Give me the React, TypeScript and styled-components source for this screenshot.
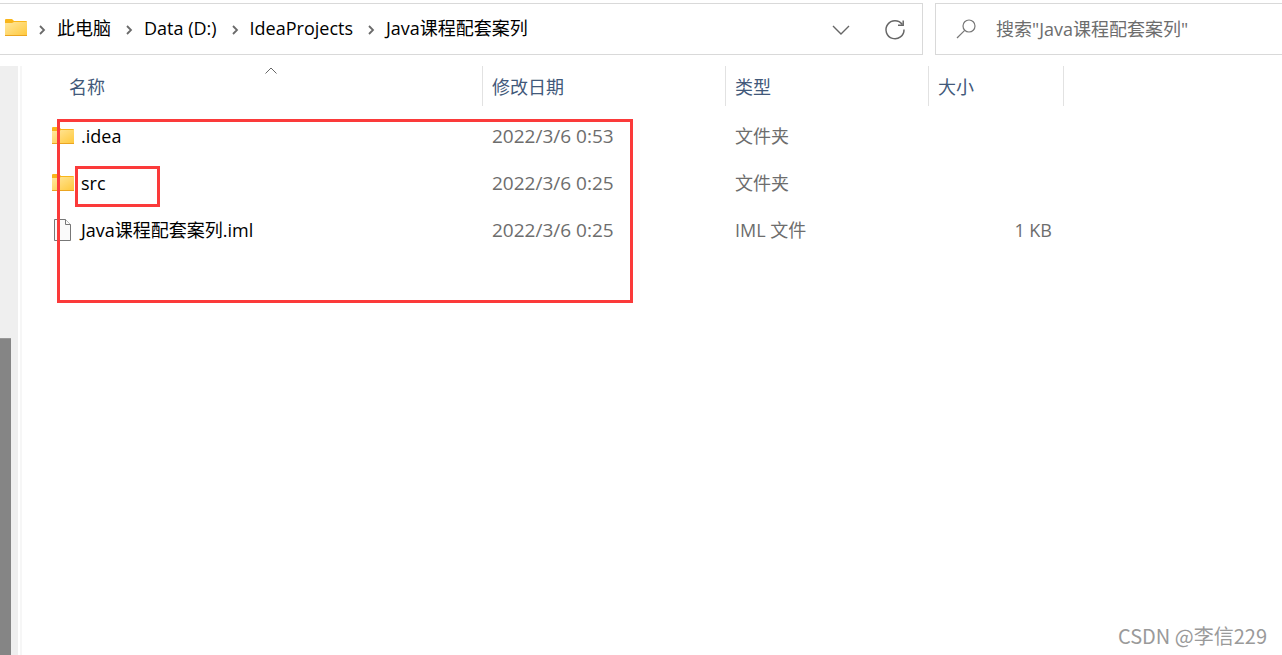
import React from 'react';
import styled, { createGlobalStyle } from 'styled-components';

const uiFont = '"Open Sans", "Noto Sans CJK SC", sans-serif';

const GlobalStyle = createGlobalStyle`
  *, *::before, *::after { box-sizing: border-box; }
  body { margin: 0; background: #fff; font-family: ${uiFont}; font-size: 18px; line-height: 24px; color: #000; }
  button, input { font: inherit; color: inherit; }
`;

const Window = styled.div`
  position: relative;
  display: flex;
  flex-direction: column;
  min-height: 100vh;
  padding-top: 3px;
  overflow: hidden;
`;

const Toolbar = styled.header`
  display: flex;
  gap: 12px;
  height: 52px;
`;

const AddressBar = styled.div`
  flex: 1;
  min-width: 0;
  display: flex;
  align-items: center;
  padding: 0 15px 2px 5px;
  border: 1px solid #d9d9d9;
  border-left: 0;
`;

const Crumbs = styled.nav`
  flex: 1;
  display: flex;
  align-items: center;
  gap: 3px;
`;

const Crumb = styled.a`
  display: flex;
  align-items: center;
  color: #000;
  text-decoration: none;
  white-space: nowrap;
`;

const CrumbArrow = styled.svg`
  display: block;
  margin: 4px 11px 0;
`;

const IconButton = styled.button`
  display: flex;
  align-items: center;
  justify-content: center;
  width: 24px;
  height: 24px;
  padding: 0;
  border: 0;
  background: none;
`;

const AddressActions = styled.div`
  display: flex;
  gap: 30px;
  padding-top: 3px;
`;

const SearchBox = styled.label`
  display: flex;
  align-items: center;
  gap: 18px;
  width: 347px;
  padding-left: 20px;
  border: 1px solid #d9d9d9;
  border-right: 0;
`;

const SearchInput = styled.input`
  flex: 1;
  min-width: 0;
  padding: 0;
  border: 0;
  outline: 0;
  background: none;
  &::placeholder { color: #6d6d6d; opacity: 1; }
`;

const Body = styled.main`
  flex: 1;
  display: flex;
  margin-top: 11px;
`;

const ScrollTrack = styled.div`
  display: flex;
  width: 18px;
  padding: 272px 7px 0 0;
  background: #efefef;
`;

const ScrollThumb = styled.div`
  flex: 1;
  border-top: 1px solid #999;
  background: #858585;
`;

const Splitter = styled.div`
  width: 4px;
  border-right: 2px solid #f6f6f6;
`;

const Listing = styled.section`
  position: relative;
  flex: 1;
  padding-left: 30px;
`;

const FileTable = styled.table`
  table-layout: fixed;
  width: 1012px;
  border-collapse: collapse;
`;

const HeaderCell = styled.th<{ $width: number; $first?: boolean }>`
  width: ${p => p.$width}px;
  padding: 0 0 6px ${p => (p.$first ? 8 : 0)}px;
  font-weight: 400;
`;

const SortButton = styled.button`
  position: relative;
  display: flex;
  align-items: center;
  width: 100%;
  height: 40px;
  padding: 2px 9px 0;
  border: 0;
  border-right: 1px solid #e2e2e2;
  background: none;
  color: #42597a;
`;

const SortCaret = styled.svg`
  position: absolute;
  top: 1px;
  left: 50%;
  margin-left: -6px;
`;

const Row = styled.tr`
  height: 47px;
`;

const Cell = styled.td<{ $right?: boolean }>`
  padding: 0 12px 0 9px;
  color: #6d6d6d;
  white-space: nowrap;
  text-align: ${p => (p.$right ? 'right' : 'left')};
`;

const DateCell = styled(Cell)`
  font-size: 19px;
`;

const NameCell = styled(Cell)`
  padding: 0;
`;

const FileLink = styled.a`
  display: flex;
  align-items: center;
  gap: 7px;
  color: #000;
  text-decoration: none;
`;

const Highlight = styled.div<{ $x: number; $y: number; $w: number; $h: number }>`
  position: absolute;
  left: ${p => p.$x}px;
  top: ${p => p.$y}px;
  width: ${p => p.$w}px;
  height: ${p => p.$h}px;
  border: 3px solid #fb3a3a;
  pointer-events: none;
`;

const Watermark = styled.div`
  position: absolute;
  right: 15px;
  bottom: 7px;
  color: #9a9a9a;
  font-family: "Noto Sans CJK SC", sans-serif;
  font-size: 20px;
`;

function FolderIcon({ id }: { id: string }) {
  return (
    <svg width="22" height="18" viewBox="0 0 22 18" aria-hidden="true">
      <defs>
        <linearGradient id={id} x1="0" y1="0" x2="1" y2="1">
          <stop offset="0" stopColor="#ffe8a0" />
          <stop offset="1" stopColor="#ffc83a" />
        </linearGradient>
      </defs>
      <path d="M0 1Q0 0 1 0H7L9 2H21Q22 2 22 3V6H0Z" fill="#f9b61b" />
      <path d="M0 4H7L9 3H22V17H0Z" fill={`url(#${id})`} />
      <path d="M0 16H22V17H0Z" fill="#eba521" />
    </svg>
  );
}

function FileIcon() {
  return (
    <svg width="22" height="22" viewBox="0 0 22 22" fill="#fafafa" stroke="#777" aria-hidden="true">
      <path d="M2.500 .5H13.500L18.500 5.500V21.500H2.500Z" />
      <path d="M13.500 .5V5.500H18.500" />
    </svg>
  );
}

const crumbs = ['此电脑', 'Data (D:)', 'IdeaProjects', 'Java课程配套案列'];

const columns = [
  { label: '名称', width: 431 },
  { label: '修改日期', width: 243 },
  { label: '类型', width: 203 },
  { label: '大小', width: 135 },
];

const files = [
  { name: '.idea', date: '2022/3/6 0:53', type: '文件夹', size: '', folder: true },
  { name: 'src', date: '2022/3/6 0:25', type: '文件夹', size: '', folder: true },
  { name: 'Java课程配套案列.iml', date: '2022/3/6 0:25', type: 'IML 文件', size: '1 KB', folder: false },
];

export default function App() {
  return (
    <Window>
      <GlobalStyle />
      <Toolbar>
        <AddressBar>
          <FolderIcon id="folder-address" />
          <Crumbs aria-label="地址">
            {crumbs.map(label => (
              <Crumb key={label} href="#">
                <CrumbArrow width="8" height="10" viewBox="0 0 8 10" fill="none" stroke="#6a6a6a" strokeWidth="1.800" aria-hidden="true">
                  <path d="M2 1L6 5L2 9" />
                </CrumbArrow>
                {label}
              </Crumb>
            ))}
          </Crumbs>
          <AddressActions>
            <IconButton aria-label="历史记录">
              <svg width="18" height="10" viewBox="0 0 18 10" fill="none" stroke="#666" strokeWidth="1.400">
                <path d="M1 1L9 9L17 1" />
              </svg>
            </IconButton>
            <IconButton aria-label="刷新">
              <svg width="22" height="22" viewBox="0 0 22 22" fill="none" stroke="#666" strokeWidth="1.500">
                <path d="M18.300 5.500A9 9 0 1 0 20 10.500" />
                <path d="M19.200 1.500V6.200H14" />
              </svg>
            </IconButton>
          </AddressActions>
        </AddressBar>
        <SearchBox>
          <svg width="22" height="22" viewBox="0 0 22 22" fill="none" stroke="#777" strokeWidth="1.200" aria-hidden="true">
            <circle cx="13" cy="8" r="6" />
            <path d="M8.700 12.300L1 20" />
          </svg>
          <SearchInput type="text" aria-label="搜索" placeholder={'搜索"Java课程配套案列"'} />
        </SearchBox>
      </Toolbar>
      <Body>
        <ScrollTrack>
          <ScrollThumb />
        </ScrollTrack>
        <Splitter />
        <Listing>
          <FileTable>
            <thead>
              <tr>
                {columns.map((column, i) => (
                  <HeaderCell key={column.label} $width={column.width} $first={i === 0}>
                    <SortButton>
                      {column.label}
                      {i === 0 && (
                        <SortCaret width="12" height="7" viewBox="0 0 12 7" fill="none" stroke="#666" aria-hidden="true">
                          <path d="M.5 6.500L6 1L11.500 6.500" />
                        </SortCaret>
                      )}
                    </SortButton>
                  </HeaderCell>
                ))}
              </tr>
            </thead>
            <tbody>
              {files.map(file => (
                <Row key={file.name}>
                  <NameCell>
                    <FileLink href="#">
                      {file.folder ? <FolderIcon id={`folder-${file.name}`} /> : <FileIcon />}
                      {file.name}
                    </FileLink>
                  </NameCell>
                  <DateCell>{file.date}</DateCell>
                  <Cell>{file.type}</Cell>
                  <Cell $right>{file.size}</Cell>
                </Row>
              ))}
            </tbody>
          </FileTable>
          <Highlight $x={35} $y={53} $w={576} $h={184} />
          <Highlight $x={53} $y={100} $w={85} $h={41} />
        </Listing>
      </Body>
      <Watermark>CSDN @李信229</Watermark>
    </Window>
  );
}
